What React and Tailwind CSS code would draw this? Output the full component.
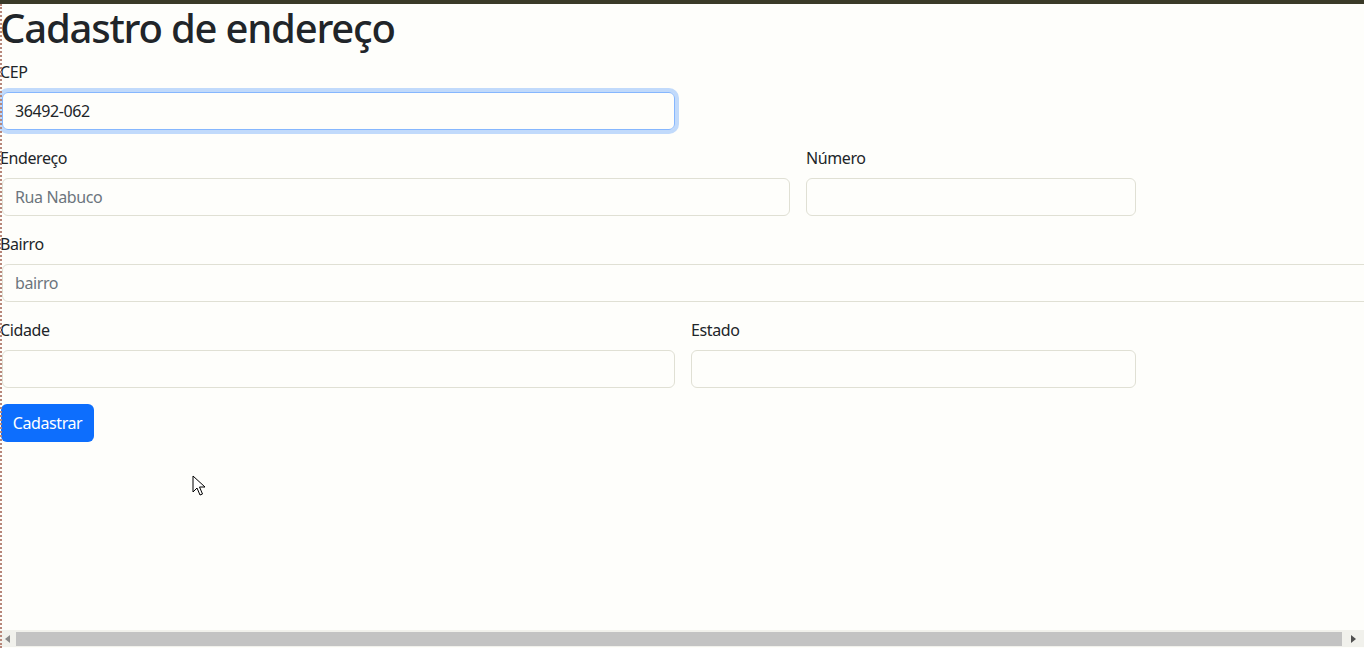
import React from "react";

const font = { fontFamily: '"Noto Sans", "Open Sans", Arial, sans-serif' };

function Field({ label, value, placeholder, width, focus, muted, first }) {
  return (
    <div className={`flex flex-col ${width}`}>
      <label className="text-[16px] leading-6 tracking-[-0.4px] text-[#212529] mb-2">{label}</label>
      <input
        readOnly
        defaultValue={value}
        placeholder={placeholder}
        className={`${first ? "ml-[2px]" : ""} h-[38px] rounded-md px-3 text-[16px] leading-6 tracking-[-0.4px] outline-none bg-transparent ${
          focus
            ? "border border-[#86b7fe] shadow-[0_0_0_4px_rgba(13,110,253,0.25)]"
            : "border border-[#e0e0d4]"
        } ${muted ? "text-[#6c757d]" : "text-[#212529]"} placeholder:text-[#6c757d]`}
      />
    </div>
  );
}

export default function App() {
  return (
    <div className="relative h-[648px] w-[1364px] overflow-hidden flex flex-col bg-[#fefefb]" style={font}>
      <div className="h-[4px] bg-[#3a3a28] shrink-0" />
      <div className="flex-1 flex flex-col">
        <h1 className="text-[40px] leading-[48px] font-medium text-[#212529] tracking-[-1.2px] mb-2">
          Cadastro de endereço
        </h1>

        <div className="mb-4">
          <Field label="CEP" value="36492-062" width="w-[675px]" focus first />
        </div>

        <div className="flex gap-4 mb-4">
          <Field label="Endereço" value="Rua Nabuco" width="w-[790px]" muted first />
          <Field label="Número" value="" width="w-[330px]" />
        </div>

        <div className="mb-4 -mr-4">
          <Field label="Bairro" placeholder="bairro" width="w-[1380px]" first />
        </div>

        <div className="flex gap-4 mb-4">
          <Field label="Cidade" value="" width="w-[675px]" first />
          <Field label="Estado" value="" width="w-[445px]" />
        </div>

        <div>
          <button className="h-[38px] w-[93px] ml-[1px] rounded-md bg-[#0d6efd] text-white text-[16px] leading-6 tracking-[-0.4px]">
            Cadastrar
          </button>
        </div>

        <div className="flex-1" />

        {/* horizontal scrollbar */}
        <div className="h-[17px] mb-[1px] flex items-center bg-[#f1f1ec]">
          <div className="w-[16px] flex justify-center">
            <svg width="6" height="8" viewBox="0 0 6 8"><path d="M5 0 L0 4 L5 8 Z" fill="#8a8a8a" /></svg>
          </div>
          <div className="flex-1 h-[14px] bg-[#c3c3c3]" />
          <div className="w-[22px] flex justify-center">
            <svg width="6" height="8" viewBox="0 0 6 8"><path d="M1 0 L6 4 L1 8 Z" fill="#505050" /></svg>
          </div>
        </div>
      </div>

      {/* capture frame edge */}
      <div className="absolute left-0 top-[4px] bottom-0 w-[2px] border-l-2 border-dotted border-[#b7877a]" />

      {/* mouse cursor */}
      <svg className="absolute left-[192px] top-[475px]" width="14" height="22" viewBox="0 0 14 22">
        <path d="M1 1 L1 17 L5 13 L8 20 L10.5 19 L7.5 12 L13 12 Z" fill="#fff" stroke="#000" strokeWidth="1" strokeLinejoin="round" />
      </svg>
    </div>
  );
}
